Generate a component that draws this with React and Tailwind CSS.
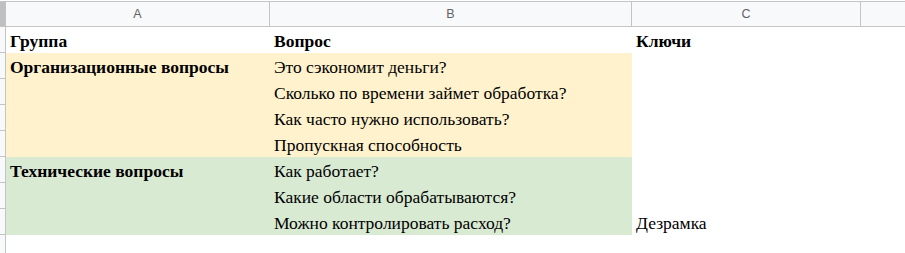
import React from 'react'

const cols = [
  { key: 'A', w: 'w-[264px]' },
  { key: 'B', w: 'w-[362px]' },
  { key: 'C', w: 'w-[229px]' },
]

const rows = [
  { a: 'Группа', b: 'Вопрос', c: 'Ключи', bold: true, bg: '' },
  { a: 'Организационные вопросы', b: 'Это сэкономит деньги?', c: '', bg: 'bg-[#fff2cc]', aBold: true },
  { a: '', b: 'Сколько по времени займет обработка?', c: '', bg: 'bg-[#fff2cc]' },
  { a: '', b: 'Как часто нужно использовать?', c: '', bg: 'bg-[#fff2cc]' },
  { a: '', b: 'Пропускная способность', c: '', bg: 'bg-[#fff2cc]' },
  { a: 'Технические вопросы', b: 'Как работает?', c: '', bg: 'bg-[#d9ead3]', aBold: true },
  { a: '', b: 'Какие области обрабатываются?', c: '', bg: 'bg-[#d9ead3]' },
  { a: '', b: 'Можно контролировать расход?', c: 'Дезрамка', bg: 'bg-[#d9ead3]' },
]

const Cell = ({ w, bg, bold, children }) => (
  <div
    className={`${w} ${bg} h-[26px] shrink-0 flex items-end pl-[4px] pb-[3px] leading-none whitespace-nowrap ${bold ? 'font-bold' : ''}`}
  >
    {children}
  </div>
)

const App = () => {
  return (
    <div className="w-[905px] h-[253px] bg-white overflow-hidden font-['Liberation_Serif',serif] text-[17.5px] text-black">
      {/* column headers */}
      <div className="flex mt-px h-[26px] border-y border-[#c4c4c4] bg-[#f8f9fa] font-['Liberation_Sans',Arial,sans-serif] text-[12.5px] text-[#5f6368]">
        <div className="w-[6px] shrink-0 bg-[#c0c0c0] border-r border-[#c4c4c4]" />
        {cols.map((c) => (
          <div key={c.key} className={`${c.w} shrink-0 flex items-center justify-center border-r border-[#c4c4c4]`}>
            {c.key}
          </div>
        ))}
        <div className="flex-1" />
      </div>

      {rows.map((r, i) => (
        <div key={i} className="flex">
          <div className="w-[6px] h-[26px] shrink-0 bg-[#f8f9fa] border-r border-b border-[#c4c4c4]" />
          <Cell w="w-[264px]" bg={r.bg} bold={r.bold || r.aBold}>{r.a}</Cell>
          <Cell w="w-[362px]" bg={r.bg} bold={r.bold}>{r.b}</Cell>
          <Cell w="w-[229px]" bg="" bold={r.bold}>{r.c}</Cell>
        </div>
      ))}
      <div className="flex">
        <div className="w-[6px] h-[26px] shrink-0 bg-[#f8f9fa] border-r border-[#c4c4c4]" />
      </div>
    </div>
  )
}

export default App
